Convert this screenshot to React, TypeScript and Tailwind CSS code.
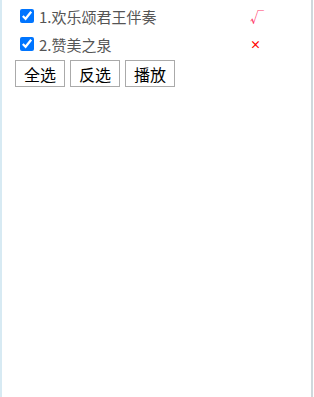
const songs = [
  { id: 1, name: "1.欢乐颂君王伴奏", ok: true },
  { id: 2, name: "2.赞美之泉", ok: false },
];

function App() {
  return (
    <div className="flex h-[397px] w-[314px] bg-white font-['Microsoft_YaHei','Noto_Sans_CJK_SC',sans-serif]">
      <div className="w-[2px] bg-[#d7eaf3]" />
      <div className="flex-1 pl-[13px] pt-[2px]">
        {songs.map((song) => (
          <div key={song.id} className="flex h-[28px] items-center pl-[5px]">
            <input type="checkbox" defaultChecked className="m-0 h-[14px] w-[14px] accent-[#0075ff]" />
            <span className="ml-[5px] w-[211px] pt-[3px] text-[15px] text-[#555]">{song.name}</span>
            <span className={song.ok ? "text-[14px] text-[#ff3a6a]" : "text-[11px] font-bold text-[#f00]"}>
              {song.ok ? "√" : "×"}
            </span>
          </div>
        ))}
        <div className="mt-[2px] flex gap-[5px]">
          {["全选", "反选", "播放"].map((label) => (
            <button
              key={label}
              className="h-[27px] w-[50px] border border-[#aaa] bg-white text-[16px] leading-none text-black"
            >
              {label}
            </button>
          ))}
        </div>
      </div>
      <div className="mr-[1px] w-[2px] bg-[#cfd8dc]" />
    </div>
  );
}

export default App;
